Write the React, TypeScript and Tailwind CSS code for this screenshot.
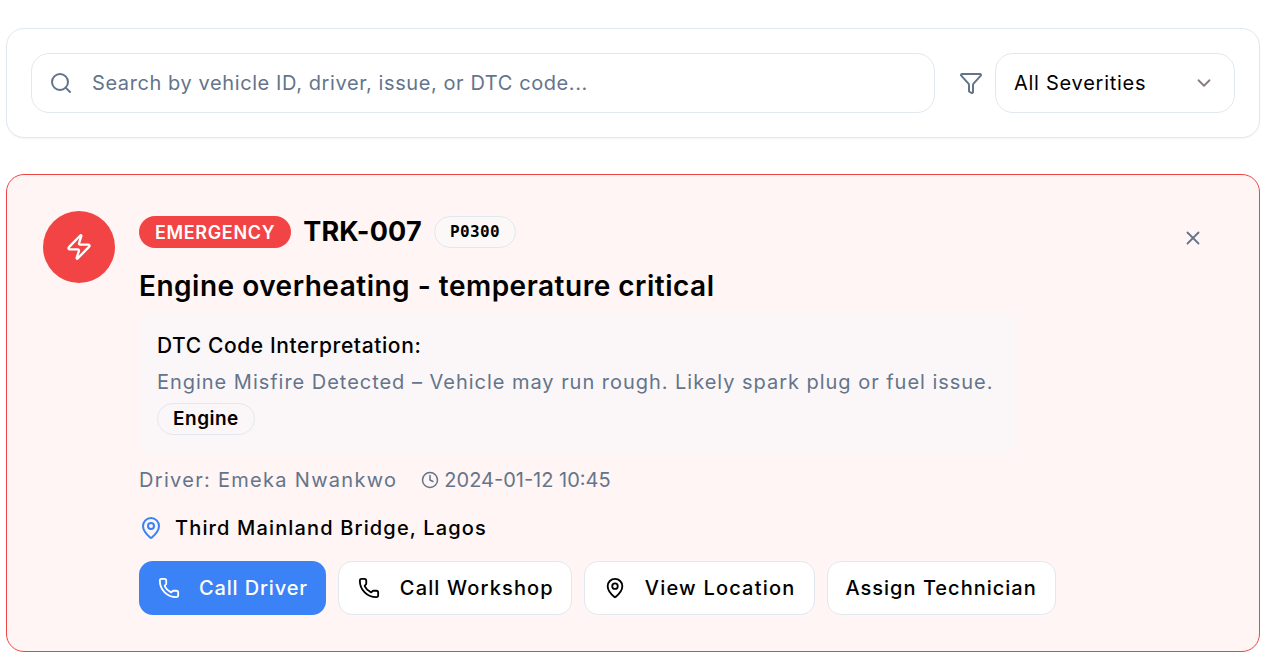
import { ChevronDown, Clock, Filter, MapPin, Phone, Search, X, Zap } from 'lucide-react';

const actions = [
  { label: 'Call Driver', icon: <Phone className="w-[22px] h-[22px]" />, primary: true, text: 'tracking-[0.85px] gap-[19px] pl-[19px] pr-[18px]' },
  { label: 'Call Workshop', icon: <Phone className="w-[22px] h-[22px]" />, text: 'tracking-[1.15px] gap-[20px] pl-[19px] pr-[17px]' },
  { label: 'View Location', icon: <MapPin className="w-[22px] h-[22px]" />, text: 'tracking-[1.2px] gap-[19px] pl-[19px] pr-[19px]' },
  { label: 'Assign Technician', text: 'tracking-[1px] pl-[17px] pr-[18px]' },
];

export default function App() {
  return (
    <div className="min-h-[667px] bg-white pt-[28px] pl-[6px] pr-[25px] text-black font-['Inter',sans-serif]">
      {/* Search and filter */}
      <div className="flex items-center h-[110px] px-[24px] bg-white border border-[#e2e8f0] rounded-[18px] shadow-[0_1px_2px_rgba(0,0,0,0.04)]">
        <div className="flex items-center flex-1 h-[60px] pl-[17px] border border-[#e2e8f0] rounded-[18px]">
          <Search className="w-[24px] h-[24px] text-[#64748b]" />
          <span className="ml-[19px] text-[20px] tracking-[0.59px] text-[#64748b]">Search by vehicle ID, driver, issue, or DTC code...</span>
        </div>
        <Filter className="ml-[24px] w-[24px] h-[24px] text-[#64748b]" />
        <div className="ml-[12px] flex items-center justify-between w-[240px] h-[60px] pl-[18px] pr-[19px] border border-[#e2e8f0] rounded-[18px]">
          <span className="text-[20px] tracking-[0.73px]">All Severities</span>
          <ChevronDown className="w-[22px] h-[22px] text-[#8a7a80]" />
        </div>
      </div>

      {/* Alert card */}
      <div className="relative mt-[36px] flex h-[478px] pt-[36px] pl-[36px] bg-[#fef5f4] border border-[#ef4444] rounded-[18px]">
        <div className="flex items-center justify-center shrink-0 w-[72px] h-[72px] rounded-full bg-[#f24444]">
          <Zap className="w-[28px] h-[28px] text-white" />
        </div>
        <div className="ml-[24px] flex-1">
          <div className="flex items-center h-[32px] mt-[5px]">
            <span className="flex items-center h-[32px] px-[16px] rounded-full bg-[#f24444] text-white text-[18px] tracking-[0.65px] font-semibold">EMERGENCY</span>
            <span className="ml-[12px] text-[27px] tracking-[0.2px] font-bold">TRK-007</span>
            <span className="ml-[12px] flex items-center h-[32px] px-[15px] rounded-full border border-[#e2e8f0] bg-[#fdf8f8] text-[16px] tracking-[0.4px] font-bold font-['DejaVu_Sans_Mono',monospace]">P0300</span>
          </div>
          <h2 className="mt-[21px] h-[34px] leading-[34px] text-[28px] tracking-[0.5px] font-semibold">Engine overheating - temperature critical</h2>
          <div className="mt-[10px] w-[878px] h-[140px] px-[18px] pt-[20px] rounded-[14px] bg-[#fbf7f8]">
            <p className="text-[21px] leading-[26px] tracking-[0.6px] font-medium">DTC Code Interpretation:</p>
            <p className="mt-[10px] text-[20px] leading-[26px] tracking-[0.97px] text-[#64748b]">Engine Misfire Detected – Vehicle may run rough. Likely spark plug or fuel issue.</p>
            <span className="mt-[8px] inline-flex items-center h-[32px] px-[15px] rounded-full border border-[#e2e8f0] text-[19px] tracking-[0.5px] font-semibold">Engine</span>
          </div>
          <div className="flex items-center mt-[13px] h-[28px] text-[20px] text-[#64748b]">
            <span className="tracking-[1.3px]">Driver: Emeka Nwankwo</span>
            <Clock className="ml-[24px] w-[18px] h-[18px]" />
            <span className="ml-[5px]">2024-01-12 10:45</span>
          </div>
          <div className="flex items-center mt-[20px] h-[28px]">
            <MapPin className="w-[24px] h-[24px] text-[#3b82f6]" />
            <span className="ml-[12px] text-[20px] tracking-[1.15px] font-medium">Third Mainland Bridge, Lagos</span>
          </div>
          <div className="flex gap-[12px] mt-[19px]">
            {actions.map((action) => (
              <button
                key={action.label}
                className={`flex items-center h-[54px] rounded-[14px] text-[20px] font-medium ${action.text} ${
                  action.primary ? 'bg-[#3b82f6] text-white' : 'bg-white border border-[#e2e8f0]'
                }`}
              >
                {action.icon}
                {action.label}
              </button>
            ))}
          </div>
        </div>
        <X className="absolute top-[52px] right-[55px] w-[22px] h-[22px] text-[#64748b]" />
      </div>
    </div>
  );
}
